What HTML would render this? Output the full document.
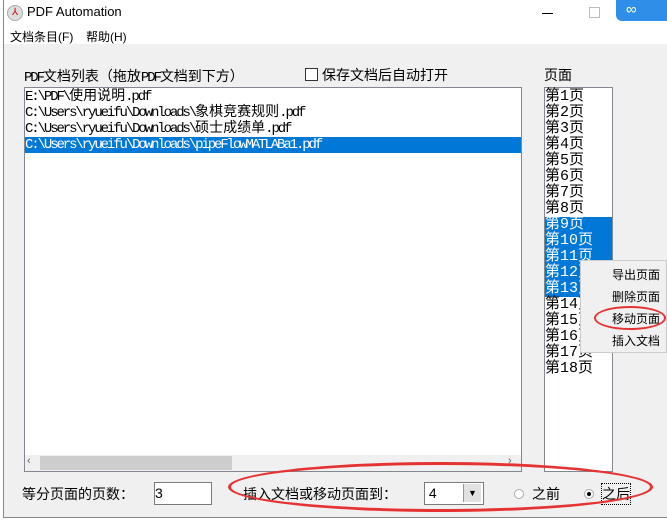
<!DOCTYPE html><html><head><meta charset="utf-8"><style>
body{margin:0;width:667px;height:520px;overflow:hidden;background:#fff;position:relative;font-family:"Liberation Sans","Noto Sans CJK SC",sans-serif;}
.a{position:absolute}
.mono{font-family:"Liberation Mono","Noto Sans CJK SC",monospace;font-size:14px;line-height:16px;white-space:nowrap}
.n{letter-spacing:-2.1px}
.sel{background:#0078d7;color:#fff}
.lbl{font-size:14px;color:#000}
</style></head><body>
<div class="a" style="left:3px;top:0;width:664px;height:517px;background:#f0f0f0;border-left:1px solid #888;border-bottom:1px solid #888"></div>
<div class="a" style="left:4px;top:0;width:663px;height:44px;background:#fff"></div>
<div class="a" style="left:7px;top:5px;width:14px;height:14px;border-radius:50%;background:#ddd;border:1px solid #aaa;color:#c00;font-size:10px;text-align:center;line-height:14px">⅄</div>
<div class="a" style="left:27px;top:4px;font-size:13px">PDF Automation</div>
<div class="a" style="left:542px;top:13px;width:11px;height:1px;background:#000"></div>
<div class="a" style="left:589px;top:7px;width:9px;height:9px;border:1px solid #bbb"></div>
<div class="a" style="left:616px;top:0;width:51px;height:21px;background:#2f8fe8;border-radius:0 0 0 6px;color:#fff;font-size:15px;line-height:20px;padding-left:10px;box-sizing:border-box">∞</div>
<div class="a" style="left:10px;top:28px;font-size:12px">文档条目(F)</div>
<div class="a" style="left:86px;top:28px;font-size:12px">帮助(H)</div>
<div class="a lbl" style="left:24px;top:66px;font-family:'Liberation Mono','Noto Sans CJK SC',monospace"><span class="n">PDF</span>文档列表（拖放<span class="n">PDF</span>文档到下方）</div>
<div class="a" style="left:305px;top:68px;width:11px;height:11px;border:1px solid #333;background:#fff"></div>
<div class="a lbl" style="left:322px;top:65px">保存文档后自动打开</div>
<div class="a lbl" style="left:544px;top:65px">页面</div>
<div class="a" style="left:24px;top:87px;width:496px;height:383px;background:#fff;border:1px solid #828790"></div>
<div class="a mono" style="left:25px;top:89px;width:496px">
<div><span class="n">E:\PDF\</span>使用说明<span class="n">.pdf</span></div><div><span class="n">C:\Users\ryueifu\Downloads\</span>象棋竞赛规则<span class="n">.pdf</span></div><div><span class="n">C:\Users\ryueifu\Downloads\</span>硕士成绩单<span class="n">.pdf</span></div><div class="sel"><span class="n">C:\Users\ryueifu\Downloads\pipeFlowMATLABa1.pdf</span></div></div>
<div class="a" style="left:25px;top:455px;width:496px;height:16px;background:#f0f0f0"></div>
<div class="a" style="left:40px;top:456px;width:192px;height:14px;background:#cdcdcd"></div>
<div class="a" style="left:27px;top:455px;font-size:11px;color:#606060">‹</div>
<div class="a" style="left:508px;top:455px;font-size:11px;color:#606060">›</div>
<div class="a" style="left:544px;top:87px;width:67px;height:383px;background:#fff;border:1px solid #828790"></div>
<div class="a mono" style="left:545px;top:89px;width:67px;font-size:15px">
<div>第1页</div><div>第2页</div><div>第3页</div><div>第4页</div><div>第5页</div><div>第6页</div><div>第7页</div><div>第8页</div><div class="sel">第9页</div><div class="sel">第10页</div><div class="sel">第11页</div><div class="sel">第12页</div><div class="sel">第13页</div><div>第14页</div><div>第15页</div><div>第16页</div><div>第17页</div><div>第18页</div></div>
<div class="a" style="left:580px;top:260px;width:87px;height:93px;background:#f0f0f0;border:1px solid #ccc;font-size:12px;line-height:22px;text-align:right;box-sizing:border-box;padding:3px 6px 0 0">导出页面<br>删除页面<br>移动页面<br>插入文档</div>
<div class="a" style="left:594px;top:306px;width:68px;height:20px;border:2px solid #e53333;border-radius:50%"></div>
<div class="a lbl" style="left:22px;top:484px">等分页面的页数：</div>
<div class="a" style="left:154px;top:482px;width:56px;height:21px;background:#fff;border:1px solid #7a7a7a;font-size:14px;line-height:21px">3</div>
<div class="a lbl" style="left:243px;top:484px">插入文档或移动页面到：</div>
<div class="a" style="left:424px;top:482px;width:58px;height:21px;background:#fff;border:1px solid #7a7a7a;font-size:14px;line-height:21px">&nbsp;4</div>
<div class="a" style="left:463px;top:484px;width:17px;height:18px;background:#e1e1e1;border-left:1px solid #999;font-size:9px;text-align:center;line-height:18px">▼</div>
<div class="a" style="left:514px;top:489px;width:8px;height:8px;border:1px solid #aaa;border-radius:50%;background:#fff"></div>
<div class="a lbl" style="left:532px;top:484px">之前</div>
<div class="a" style="left:584px;top:489px;width:8px;height:8px;border:1px solid #aaa;border-radius:50%;background:#fff"></div>
<div class="a" style="left:587px;top:492px;width:4px;height:4px;border-radius:50%;background:#000"></div>
<div class="a lbl" style="left:602px;top:484px;outline:1px dotted #000">之后</div>
<div class="a" style="left:228px;top:462px;width:425px;height:50px;border:3px solid #e53333;border-radius:50%;box-sizing:border-box"></div>
</body></html>
